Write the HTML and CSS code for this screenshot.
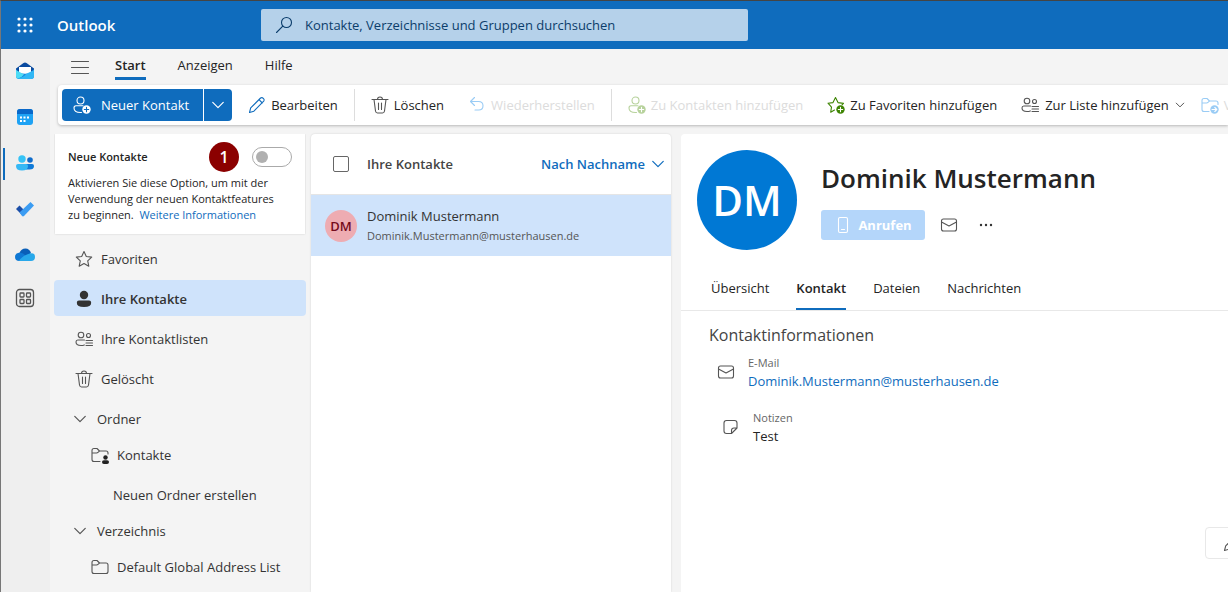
FILE: index.html
```
<!DOCTYPE html>
<html lang="de">
<head>
  <meta charset="UTF-8">
  <meta name="viewport" content="width=device-width, initial-scale=1.0">
  <title>Kontakte - Outlook</title>
  <link rel="stylesheet" href="styles.css">
</head>
<body>
  <!-- Wiederverwendete Symbole -->
  <svg class="symbols" aria-hidden="true">
    <symbol id="chevron" viewBox="0 0 16 16"><path d="M2 5l6 6 6-6"/></symbol>
    <symbol id="star" viewBox="0 0 18 18"><path d="M9 1.5l2.3 5 5.4.6-4 3.7 1.1 5.4L9 13.500l-4.800 2.700 1.100-5.400-4-3.700 5.400-.6z"/></symbol>
    <symbol id="trash" viewBox="0 0 18 18"><path d="M1 3.500h16M3 3.500l1.500 11.500q.3 2 2 2h5q1.700 0 2-2L15 3.500M6.500 3.500q0-2.500 2.500-2.500t2.500 2.500M7.500 7v6.500M10.500 7v6.500"/></symbol>
    <symbol id="people-list" viewBox="0 0 18 18"><circle cx="6" cy="5" r="2.800"/><circle cx="13.500" cy="5.500" r="2"/><path d="M9.500 10H2.800Q1 10 1 12q0 3.500 5 3.500 2 0 3.300-.6M11 10.500h6.500M11 13h6.500M11 15.500h6.500"/></symbol>
    <symbol id="person-add" viewBox="0 0 18 18"><circle cx="7.500" cy="4.500" r="3.500"/><path d="M10 9.800H3Q1 9.800 1 12q0 4.500 6.500 4.500h1"/><circle class="badge" cx="13.500" cy="13.500" r="4.200"/><path class="plus" d="M13.500 11.300v4.400M11.300 13.500h4.400"/></symbol>
    <symbol id="folder" viewBox="0 0 18 18"><path d="M1 13.500v-9Q1 2.500 3 2.500h3L8.500 5H15q2 0 2 2v6.500q0 2-2 2H3q-2 0-2-2zM1 7h4.500q1 0 1.500-.7L8.500 5"/></symbol>
    <symbol id="mail" viewBox="0 0 18 18"><rect x="1.500" y="3" width="15" height="12" rx="2"/><path d="M1.500 6L9 10l7.500-4"/></symbol>
    <symbol id="pencil" viewBox="0 0 18 18"><path d="M1.500 16.500l1.200-4.600L12.600 2q1.300-1 2.700.3t.4 2.800L5.900 15.200zM11 3.600L14.300 7"/></symbol>
  </svg>

  <header class="topbar">
    <button class="waffle" aria-label="App-Startfeld">
      <svg viewBox="0 0 16 16"><g fill="#fff"><circle cx="2" cy="2" r="1.600"/><circle cx="8" cy="2" r="1.600"/><circle cx="14" cy="2" r="1.600"/><circle cx="2" cy="8" r="1.600"/><circle cx="8" cy="8" r="1.600"/><circle cx="14" cy="8" r="1.600"/><circle cx="2" cy="14" r="1.600"/><circle cx="8" cy="14" r="1.600"/><circle cx="14" cy="14" r="1.600"/></g></svg>
    </button>
    <span class="brand">Outlook</span>
    <label class="search">
      <svg class="icon" viewBox="0 0 18 18"><circle cx="11.500" cy="6.500" r="5"/><path d="M7.800 10.200L1.500 16.500"/></svg>
      <input type="search" aria-label="Suchen" placeholder="Kontakte, Verzeichnisse und Gruppen durchsuchen">
    </label>
  </header>

  <div class="app">
    <nav class="rail" aria-label="Apps">
      <a href="#" aria-label="E-Mail">
        <svg viewBox="0 0 20 20"><path fill="#0a4ba0" d="M1 7.500L8.500 2q1.500-1 3 0L19 7.500V14H1z"/><path fill="#fff" d="M4 6h12v7l-6 3-6-3z"/><path fill="#1688e0" d="M1 8l3 3.500q6 2.500 12 0L19 8v7q0 3-3 3H4q-3 0-3-3z"/><path fill="#4ddcf5" d="M1 9l8 4.500q-2 3-6.500 4.200Q1 17 1 15z"/><path fill="#31b7f5" d="M2.500 17.700Q9 16 11 13l8-4v6q0 3-3 3H4z"/></svg>
      </a>
      <a href="#" aria-label="Kalender">
        <svg viewBox="0 0 20 20"><rect x="2" y="2" width="16" height="16" rx="3" fill="#1ea2f4"/><path fill="#0a68c9" d="M2 7V5q0-3 3-3h10q3 0 3 3v2z"/><path stroke="#fff" stroke-width="2" stroke-dasharray="2 1.500" d="M8.500 10.500h7M5 10.500h2M5 14h6"/></svg>
      </a>
      <a href="#" class="current" aria-label="Personen">
        <svg viewBox="0 0 20 20"><circle cx="7" cy="6" r="3.700" fill="#35c3f6"/><circle cx="15" cy="7" r="2.800" fill="#0f6ccb"/><path fill="#0f7ad8" d="M11 11h6q2 0 2 2 0 3.500-4.500 3.500H11z"/><path fill="#35b8f5" d="M3 11h8q2 0 2 2 0 4.500-6 4.500T1 13q0-2 2-2z"/></svg>
      </a>
      <a href="#" aria-label="To Do">
        <svg viewBox="0 0 20 20"><path fill="#1c4fa8" d="M1 10l3.500-3.500L11 13l-3.500 3.500z"/><path fill="#3b9cf2" d="M4.500 13.500L15.500 3 19 6.500 9 17q-1 .8-2 0z"/></svg>
      </a>
      <a href="#" aria-label="OneDrive">
        <svg viewBox="0 0 20 20"><path fill="#0a5fb8" d="M4.500 8Q6 3.500 10.500 3.500q4 0 5.500 4.500l-5 5z"/><path fill="#0f78d4" d="M4.500 16Q0 16 0 12t5-4.500q3 0 6 3.500l3 5z"/><path fill="#28a8ea" d="M4 16q2-4 8-6.500Q20 6 20 12q0 4-4 4z"/></svg>
      </a>
      <a href="#" class="more" aria-label="Weitere Apps">
        <svg viewBox="0 0 20 20" fill="none" stroke="#555" stroke-width="1.300"><rect x="1.500" y="1.500" width="17" height="17" rx="3"/><rect x="5" y="5" width="4" height="4" rx=".7"/><rect x="11.500" y="5" width="4" height="4" rx=".7"/><rect x="5" y="11.500" width="4" height="4" rx=".7"/><rect x="11.500" y="11.500" width="4" height="4" rx=".7"/></svg>
      </a>
    </nav>

    <main class="main">
      <nav class="menu">
        <button class="burger" aria-label="Navigationsbereich"><svg class="icon" viewBox="0 0 18 18"><path d="M.5 3.500h17M.5 9.500h17M.5 15.500h17"/></svg></button>
        <button class="menu-tab active">Start</button>
        <button class="menu-tab">Anzeigen</button>
        <button class="menu-tab">Hilfe</button>
      </nav>

      <div class="toolbar">
        <div class="split">
          <button class="new-contact"><svg class="icon"><use href="#person-add"/></svg>Neuer Kontakt</button>
          <button class="split-more" aria-label="Weitere Optionen"><svg class="icon small"><use href="#chevron"/></svg></button>
        </div>
        <button class="tool"><svg class="icon blue"><use href="#pencil"/></svg>Bearbeiten</button>
        <span class="divider"></span>
        <button class="tool"><svg class="icon"><use href="#trash"/></svg>Löschen</button>
        <button class="tool" disabled><svg class="icon light-blue" viewBox="0 0 18 18"><path d="M6.500 1.500L2.500 5.500l4 4M2.500 5.500h8q4.500 0 4.500 4.300t-4.500 4.200H7"/></svg>Wiederherstellen</button>
        <span class="divider"></span>
        <button class="tool" disabled><svg class="icon light-green"><use href="#person-add"/></svg>Zu Kontakten hinzufügen</button>
        <button class="tool"><svg class="icon green" viewBox="0 0 18 18"><path d="M7.500 14l-3.800 2.200.8-5L1 7.200l5-.6 2.500-5 2.500 5 5.500.8-1.500 1.400"/><circle class="badge" cx="13.500" cy="13.500" r="4.200"/><path class="plus" d="M13.500 11.300v4.400M11.300 13.500h4.400"/></svg>Zu Favoriten hinzufügen</button>
        <button class="tool dropdown"><svg class="icon"><use href="#people-list"/></svg>Zur Liste hinzufügen<svg class="icon tiny"><use href="#chevron"/></svg></button>
        <button class="tool" disabled><svg class="icon light-blue" viewBox="0 0 18 18"><path d="M8 15.500H3q-2 0-2-2v-9q0-2 2-2h3L8.500 5H15q2 0 2 2v1.500M1 7h4.500q1 0 1.500-.7L8.500 5"/><circle class="badge" cx="13.500" cy="13.500" r="4.200"/><path class="plus" d="M11 13.500h4.800M13.800 11.500l2 2-2 2"/></svg>Verschieben</button>
      </div>

      <div class="panes">
        <aside class="sidebar">
          <section class="promo">
            <div class="promo-head">
              <label for="new-contacts">Neue Kontakte</label>
              <span class="step">1</span>
              <input type="checkbox" role="switch" class="toggle" id="new-contacts">
            </div>
            <p>Aktivieren Sie diese Option, um mit der Verwendung der neuen Kontaktfeatures zu beginnen.&nbsp; <a href="#">Weitere Informationen</a></p>
          </section>
          <nav class="folders">
            <a href="#" class="folder"><svg class="icon"><use href="#star"/></svg>Favoriten</a>
            <a href="#" class="folder selected"><svg class="icon" viewBox="0 0 18 18"><circle cx="9" cy="5" r="4.200" fill="#333" stroke="none"/><path fill="#333" stroke="none" d="M4 10.500h10q2.200 0 2.200 2.200Q16.200 17 9 17t-7.200-4.300q0-2.200 2.200-2.200z"/></svg>Ihre Kontakte</a>
            <a href="#" class="folder"><svg class="icon"><use href="#people-list"/></svg>Ihre Kontaktlisten</a>
            <a href="#" class="folder"><svg class="icon"><use href="#trash"/></svg>Gelöscht</a>
            <button class="folder group"><svg class="icon small"><use href="#chevron"/></svg>Ordner</button>
            <a href="#" class="folder child"><svg class="icon" viewBox="0 0 18 18"><path d="M9 15.500H3q-2 0-2-2v-9q0-2 2-2h3L8.500 5H15q2 0 2 2v1M1 7h4.500q1 0 1.500-.7L8.500 5"/><circle cx="14.500" cy="11.500" r="2.200" fill="#222" stroke="none"/><rect x="11" y="14.200" width="7" height="3.800" rx="1.900" fill="#222" stroke="none"/></svg>Kontakte</a>
            <button class="folder create">Neuen Ordner erstellen</button>
            <button class="folder group"><svg class="icon small"><use href="#chevron"/></svg>Verzeichnis</button>
            <a href="#" class="folder child"><svg class="icon"><use href="#folder"/></svg>Default Global Address List</a>
          </nav>
        </aside>

        <section class="list">
          <div class="list-head">
            <input type="checkbox" class="check" id="select-all">
            <label for="select-all">Ihre Kontakte</label>
            <button class="sort">Nach Nachname<svg class="icon small"><use href="#chevron"/></svg></button>
          </div>
          <a href="#" class="contact">
            <span class="avatar">DM</span>
            <span class="contact-text">
              <span class="contact-name">Dominik Mustermann</span>
              <span class="contact-mail">Dominik.Mustermann@musterhausen.de</span>
            </span>
          </a>
        </section>

        <article class="detail">
          <div class="profile">
            <span class="avatar large">DM</span>
            <div class="profile-text">
              <h1>Dominik Mustermann</h1>
              <div class="actions">
                <button class="call" disabled><svg class="icon" viewBox="0 0 18 18"><rect x="4.500" y="1.500" width="9" height="15" rx="1.500"/><path d="M7.500 13.500h3"/></svg>Anrufen</button>
                <button class="action" aria-label="E-Mail senden"><svg class="icon"><use href="#mail"/></svg></button>
                <button class="action" aria-label="Mehr"><svg class="icon" viewBox="0 0 18 18"><g fill="#333" stroke="none"><circle cx="4" cy="9" r="1.200"/><circle cx="9" cy="9" r="1.200"/><circle cx="14" cy="9" r="1.200"/></g></svg></button>
              </div>
            </div>
          </div>
          <div class="detail-tabs">
            <button>Übersicht</button>
            <button class="active">Kontakt</button>
            <button>Dateien</button>
            <button>Nachrichten</button>
          </div>
          <div class="info">
            <h2>Kontaktinformationen</h2>
            <div class="field">
              <svg class="icon"><use href="#mail"/></svg>
              <div><span class="field-label">E-Mail</span><a href="#">Dominik.Mustermann@musterhausen.de</a></div>
            </div>
            <div class="field note">
              <svg class="icon" viewBox="0 0 18 18"><path d="M9.500 15.500H4.500q-2.500 0-2.500-2.500V5q0-2.500 2.500-2.500h8Q15 2.500 15 5v5zM15 10h-3q-2.500 0-2.500 2.500v3"/></svg>
              <div><span class="field-label">Notizen</span><span>Test</span></div>
            </div>
          </div>
          <button class="floating" aria-label="Kontakt bearbeiten"><svg class="icon"><use href="#pencil"/></svg></button>
        </article>
      </div>
    </main>
  </div>
</body>
</html>
```
FILE: styles.css
```
* {
  box-sizing: border-box;
}

body {
  margin: 0;
  height: 100vh;
  display: flex;
  flex-direction: column;
  overflow: hidden;
  border-top: 1px solid #444;
  border-left: 1px solid #777;
  background: #f4f4f4;
  color: #242424;
  font-family: "Open Sans", "Noto Sans", sans-serif;
  font-size: 13px;
  line-height: 20px;
}

button {
  padding: 0;
  border: none;
  background: none;
  color: inherit;
  font: inherit;
  white-space: nowrap;
}

a {
  color: #0f6cbd;
  text-decoration: none;
}

.symbols {
  display: none;
}

/* Symbole */
.icon {
  flex: none;
  width: 18px;
  height: 18px;
  fill: none;
  stroke: #555;
  stroke-width: 1.1;
  stroke-linecap: round;
  stroke-linejoin: round;
}

.icon.small {
  width: 14px;
  height: 14px;
  stroke-width: 1.4;
}

.icon.tiny {
  width: 10px;
  height: 10px;
  stroke-width: 1.6;
}

.icon.blue {
  stroke: #0f6cbd;
}

.icon.light-blue {
  stroke: #9accf5;
  --badge: #9accf5;
}

.icon.green {
  stroke: #3f8505;
  --badge: #3f8505;
}

.icon.light-green {
  stroke: #b7d29c;
  --badge: #b7d29c;
}

.badge {
  fill: var(--badge, #fff);
  stroke: none;
}

.plus {
  stroke: var(--plus, #fff);
}

/* Kopfleiste */
.topbar {
  flex: none;
  display: flex;
  align-items: center;
  height: 48px;
  background: #0f6cbd;
}

.waffle {
  width: 48px;
  height: 48px;
}

.waffle svg {
  display: block;
  width: 16px;
  height: 16px;
  margin: auto;
}

.brand {
  width: 204px;
  padding-left: 8px;
  color: #fff;
  font-size: 15px;
  font-weight: 600;
}

.search {
  display: flex;
  align-items: center;
  gap: 12px;
  width: 40%;
  max-width: 487px;
  height: 32px;
  margin-left: 8px;
  padding: 0 14px;
  border-radius: 2px;
  background: #b5d1ea;
}

.search .icon {
  stroke: #0b3d6b;
}

.search input {
  flex: 1;
  padding: 0;
  border: none;
  outline: none;
  background: none;
  font: inherit;
}

.search input::placeholder {
  color: #0b3d6b;
  opacity: 1;
}

.app {
  flex: 1;
  display: flex;
  min-height: 0;
}

/* App-Leiste links */
.rail {
  flex: none;
  width: 49px;
  background: #efefef;
}

.rail a {
  display: flex;
  align-items: center;
  justify-content: center;
  height: 46px;
  padding: 0 2px 2px 0;
}

.rail a.current {
  height: 32px;
  margin: 7px 2px;
  padding-right: 4px;
  border-left: 2px solid #0f6cbd;
}

.rail a.more {
  height: 40px;
}

.rail svg {
  width: 20px;
  height: 20px;
}

.main {
  flex: 1;
  display: flex;
  flex-direction: column;
  min-width: 0;
}

.menu {
  display: flex;
  gap: 32px;
  height: 36px;
  padding-left: 21px;
}

.burger {
  margin-right: -6px;
}

.burger .icon {
  display: block;
}

.menu-tab {
  height: 31px;
  padding-top: 4px;
  border-bottom: 3px solid transparent;
}

.menu-tab.active {
  border-color: #0f6cbd;
  font-weight: 600;
}

.toolbar {
  flex: none;
  display: flex;
  align-items: center;
  height: 40px;
  margin-left: 8px;
  padding-left: 4px;
  overflow: hidden;
  border-radius: 4px 0 0 4px;
  background: #fff;
  box-shadow: 0 1px 3px rgba(0, 0, 0, 0.25);
}

.split {
  display: flex;
  height: 32px;
  margin-right: 4px;
  border-radius: 4px;
  background: #0f6cbd;
  color: #fff;
}

.split .icon {
  stroke: #fff;
  --plus: #0f6cbd;
}

.new-contact {
  display: flex;
  align-items: center;
  gap: 10px;
  padding: 0 14px 0 11px;
  font-weight: 500;
}

.split-more {
  display: flex;
  align-items: center;
  justify-content: center;
  width: 29px;
  border-left: 1px solid #fff;
}

.tool {
  display: flex;
  align-items: center;
  gap: 5px;
  padding: 0 12px;
}

.tool.dropdown {
  gap: 6px;
  padding-right: 4px;
}

.tool:disabled {
  color: #dcdcdc;
  font-weight: 500;
}

.divider {
  flex: none;
  width: 1px;
  height: 32px;
  margin: 0 4px;
  background: #ddd;
}

.panes {
  flex: 1;
  display: flex;
  min-height: 0;
  padding-top: 9px;
}

/* Ordnerbereich */
.sidebar {
  flex: none;
  width: 252px;
  margin: 0 5px 0 4px;
  overflow: hidden;
}

.promo {
  height: 100px;
  margin: 0 1px 6px;
  padding: 8px 13px;
  background: #fff;
  box-shadow: 0 0 2px rgba(0, 0, 0, 0.15);
  font-size: 11px;
  line-height: 16px;
}

.promo-head {
  display: flex;
  align-items: center;
  height: 30px;
}

.promo-head label {
  flex: 1;
  font-weight: 600;
}

.step {
  width: 30px;
  margin-right: 13px;
  border-radius: 50%;
  background: #8b0000;
  color: #fff;
  font-size: 16px;
  font-weight: 600;
  line-height: 30px;
  text-align: center;
}

.toggle {
  appearance: none;
  display: flex;
  align-items: center;
  width: 40px;
  height: 20px;
  margin: 0;
  padding: 0 3px;
  border: 1px solid #aaa;
  border-radius: 10px;
}

.toggle::before {
  content: '';
  width: 12px;
  height: 12px;
  border-radius: 50%;
  background: #b0b0b0;
}

.toggle:checked {
  justify-content: flex-end;
}

.promo p {
  margin: 3px 8px 0 0;
}

.folders {
  display: flex;
  flex-direction: column;
}

.folder {
  display: flex;
  align-items: center;
  gap: 8px;
  height: 36px;
  margin-bottom: 4px;
  padding-top: 1px;
  padding-left: 21px;
  border-radius: 4px;
  color: #333;
}

.folder.selected {
  background: #cfe3fb;
  font-weight: 600;
}

.folder.group {
  gap: 10px;
  margin-bottom: 0;
  padding-left: 19px;
}

.folder.child {
  padding-left: 37px;
}

.folder.create {
  margin-bottom: 0;
  padding-left: 59px;
}

/* Kontaktliste */
.list {
  flex: none;
  width: 360px;
  margin-right: 10px;
  border-radius: 4px 4px 0 0;
  background: #fff;
  box-shadow: 0 0 2px rgba(0, 0, 0, 0.15);
}

.list-head {
  display: flex;
  align-items: center;
  height: 61px;
  padding: 0 6px 0 22px;
  border-bottom: 1px solid #e5e5e5;
  font-weight: 600;
}

.list-head label {
  flex: 1;
  color: #444;
}

.check {
  appearance: none;
  width: 16px;
  height: 16px;
  margin: 0 18px 0 0;
  border: 1px solid #666;
  border-radius: 2px;
}

.sort {
  display: flex;
  align-items: center;
  gap: 6px;
  color: #0f6cbd;
}

.sort .icon {
  stroke: #0f6cbd;
}

.contact {
  display: flex;
  align-items: center;
  gap: 10px;
  height: 61px;
  padding-top: 1px;
  padding-left: 14px;
  background: #cfe3fb;
  color: #333;
}

.avatar {
  flex: none;
  width: 32px;
  border-radius: 50%;
  background: #eeacb2;
  color: #750b1c;
  font-weight: 600;
  line-height: 32px;
  text-align: center;
}

.avatar.large {
  width: 100px;
  background: #0078d4;
  color: #fff;
  font-size: 42px;
  line-height: 100px;
}

.contact-text {
  display: flex;
  flex-direction: column;
}

.contact-mail {
  color: #555;
  font-size: 11px;
}

/* Detailansicht */
.detail {
  position: relative;
  flex: 1;
  min-width: 0;
  overflow: hidden;
  border-radius: 4px 0 0 0;
  background: #fff;
}

.profile {
  display: flex;
  gap: 24px;
  padding: 16px 16px 0;
}

h1 {
  margin: 10px 0 14px;
  font-size: 26px;
  font-weight: 600;
  line-height: 36px;
}

.actions {
  display: flex;
  align-items: center;
  gap: 19px;
}

.call {
  display: flex;
  align-items: center;
  justify-content: center;
  gap: 6px;
  width: 104px;
  height: 30px;
  margin-right: -4px;
  border-radius: 3px;
  background: #b4d6fa;
  color: #fff;
  font-weight: 700;
}

.call .icon {
  stroke: #fff;
}

.action .icon {
  display: block;
}

.detail-tabs {
  display: flex;
  gap: 27px;
  height: 44px;
  margin-top: 17px;
  padding-left: 30px;
  border-bottom: 1px solid #e8e8e8;
}

.detail-tabs button {
  border-bottom: 2px solid transparent;
}

.detail-tabs .active {
  border-color: #0f6cbd;
  font-weight: 600;
}

.info {
  padding: 12px 28px;
}

h2 {
  margin: 0 0 7px;
  color: #444;
  font-size: 16px;
  font-weight: 400;
  line-height: 24px;
}

.field {
  display: flex;
  align-items: center;
  gap: 13px;
  margin-bottom: 19px;
  padding-left: 8px;
  line-height: 18px;
}

.field.note {
  padding-left: 13px;
}

.field-label {
  display: block;
  color: #666;
  font-size: 11px;
}

/* Schaltfläche über dem Inhalt */
.floating {
  position: absolute;
  right: -32px;
  bottom: 33px;
  width: 55px;
  height: 32px;
  padding-left: 17px;
  border: 1px solid #e8e8e8;
  border-radius: 4px;
  background: #fff;
}

.floating .icon {
  display: block;
}
```
